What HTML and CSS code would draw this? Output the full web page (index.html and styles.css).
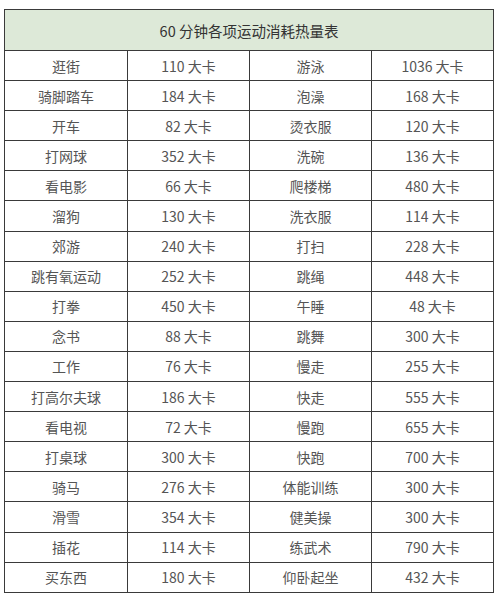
FILE: index.html
```html
<!DOCTYPE html>
<html lang="zh">
<head>
<meta charset="utf-8">
<link rel="stylesheet" href="styles.css">
</head>
<body>
<table class="cal">
  <colgroup>
    <col class="c1"><col class="c2"><col class="c3"><col class="c4">
  </colgroup>
  <thead>
    <tr><th colspan="4">60 分钟各项运动消耗热量表</th></tr>
  </thead>
  <tbody>
    <tr><td>逛街</td><td>110 大卡</td><td>游泳</td><td>1036 大卡</td></tr>
    <tr><td>骑脚踏车</td><td>184 大卡</td><td>泡澡</td><td>168 大卡</td></tr>
    <tr><td>开车</td><td>82 大卡</td><td>烫衣服</td><td>120 大卡</td></tr>
    <tr><td>打网球</td><td>352 大卡</td><td>洗碗</td><td>136 大卡</td></tr>
    <tr><td>看电影</td><td>66 大卡</td><td>爬楼梯</td><td>480 大卡</td></tr>
    <tr><td>溜狗</td><td>130 大卡</td><td>洗衣服</td><td>114 大卡</td></tr>
    <tr><td>郊游</td><td>240 大卡</td><td>打扫</td><td>228 大卡</td></tr>
    <tr><td>跳有氧运动</td><td>252 大卡</td><td>跳绳</td><td>448 大卡</td></tr>
    <tr><td>打拳</td><td>450 大卡</td><td>午睡</td><td>48 大卡</td></tr>
    <tr><td>念书</td><td>88 大卡</td><td>跳舞</td><td>300 大卡</td></tr>
    <tr><td>工作</td><td>76 大卡</td><td>慢走</td><td>255 大卡</td></tr>
    <tr><td>打高尔夫球</td><td>186 大卡</td><td>快走</td><td>555 大卡</td></tr>
    <tr><td>看电视</td><td>72 大卡</td><td>慢跑</td><td>655 大卡</td></tr>
    <tr><td>打桌球</td><td>300 大卡</td><td>快跑</td><td>700 大卡</td></tr>
    <tr><td>骑马</td><td>276 大卡</td><td>体能训练</td><td>300 大卡</td></tr>
    <tr><td>滑雪</td><td>354 大卡</td><td>健美操</td><td>300 大卡</td></tr>
    <tr><td>插花</td><td>114 大卡</td><td>练武术</td><td>790 大卡</td></tr>
    <tr><td>买东西</td><td>180 大卡</td><td>仰卧起坐</td><td>432 大卡</td></tr>
  </tbody>
</table>
</body>
</html>
```

FILE: styles.css
```css
html, body {
  margin: 0;
  padding: 0;
  background: #ffffff;
}
body {
  padding: 9px 0 0 4px;
  font-family: "Noto Sans CJK SC", "Noto Sans", "DejaVu Sans", sans-serif;
}
.cal {
  border-collapse: collapse;
  table-layout: fixed;
  width: 490px;
  border: 1px solid #3a3a3a;
}
.c1 { width: 123px; }
.c2, .c3, .c4 { width: 122px; }
.cal th {
  height: 40px;
  padding: 0;
  background: #dde9d8;
  color: #333333;
  font-weight: normal;
  font-size: 14.5px;
  text-align: center;
  border: 1px solid #3a3a3a;
}
.cal td {
  height: 29.1px;
  padding: 0;
  color: #555555;
  font-size: 14px;
  text-align: center;
  border: 1px solid #3a3a3a;
  line-height: 1;
}
```
